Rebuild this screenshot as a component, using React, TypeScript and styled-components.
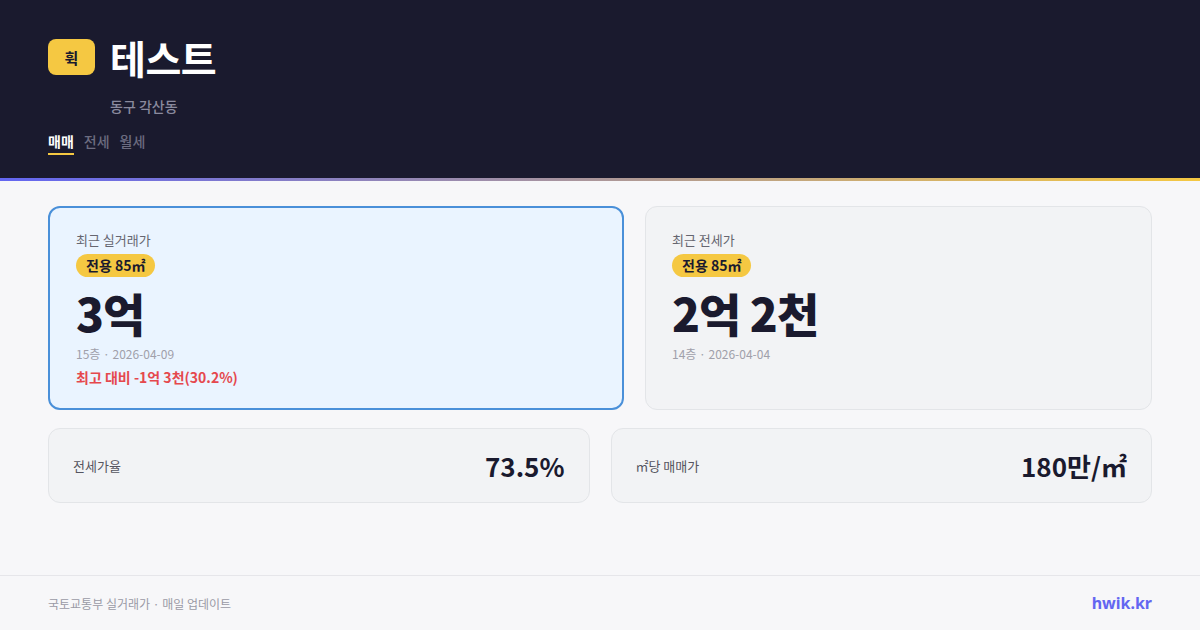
import styled, { createGlobalStyle } from "styled-components";

const GlobalStyle = createGlobalStyle`
  html, body {
    margin: 0;
    padding: 0;
    background: #f7f7f9;
    font-family: "Noto Sans CJK KR", "Noto Sans", sans-serif;
  }
  #root {
    width: 1200px;
    height: 630px;
  }
`;

const Page = styled.div`
  width: 1200px;
  height: 630px;
  display: flex;
  flex-direction: column;
  background: #f7f7f9;
  overflow: hidden;
`;

const Header = styled.header`
  background: #1a1a2e;
  height: 181px;
  box-sizing: border-box;
  padding: 33px 48px 0;
  border-bottom: 3px solid transparent;
  border-image: linear-gradient(90deg, #6366f1, #f5c842) 1;
`;

const TitleRow = styled.div`
  display: flex;
  align-items: center;
  gap: 15px;
`;

const Logo = styled.div`
  width: 47px;
  height: 36px;
  border-radius: 8px;
  background: #f5c842;
  color: #1a1a2e;
  font-size: 15px;
  font-weight: 700;
  display: flex;
  align-items: center;
  justify-content: center;
`;

const Title = styled.h1`
  margin: 0;
  color: #ffffff;
  font-size: 39px;
  font-weight: 700;
  line-height: 48px;
  letter-spacing: -0.5px;
`;

const Sub = styled.div`
  margin: 15px 0 0 62px;
  color: #8a8a9e;
  font-size: 14px;
  font-weight: 500;
  line-height: 20px;
`;

const Tabs = styled.nav`
  display: flex;
  gap: 10px;
  margin-top: 15px;
`;

const Tab = styled.span<{ $active?: boolean }>`
  font-size: 14px;
  font-weight: ${(p) => (p.$active ? 700 : 500)};
  color: ${(p) => (p.$active ? "#ffffff" : "#6c6c80")};
  line-height: 20px;
  padding-bottom: 2px;
  border-bottom: 2px solid ${(p) => (p.$active ? "#f5c842" : "transparent")};
`;

const Main = styled.main`
  flex: 1;
  padding: 25px 48px 0;
  display: flex;
  flex-direction: column;
  gap: 18px;
`;

const TopRow = styled.div`
  display: grid;
  grid-template-columns: 576px 1fr;
  gap: 21px;
`;

const BottomRow = styled.div`
  display: grid;
  grid-template-columns: 1fr 1fr;
  gap: 21px;
`;

const PriceCard = styled.div<{ $highlight?: boolean }>`
  height: 204px;
  box-sizing: border-box;
  border-radius: 12px;
  background: ${(p) => (p.$highlight ? "#eaf4ff" : "#f2f3f5")};
  border: ${(p) => (p.$highlight ? "2px solid #4a90d9" : "1px solid #e3e5e8")};
  padding: ${(p) => (p.$highlight ? "23px 26px" : "24px 26px")};
  display: flex;
  flex-direction: column;
`;

const Label = styled.div`
  font-size: 13px;
  color: #666670;
  line-height: 18px;
`;

const AreaBadge = styled.span`
  align-self: flex-start;
  margin-top: 5px;
  background: #f5c842;
  color: #1a1a2e;
  font-size: 14px;
  font-weight: 700;
  line-height: 23px;
  padding: 0 10px;
  border-radius: 12px;
`;

const Price = styled.div`
  margin-top: 2px;
  font-size: 46px;
  font-weight: 800;
  color: #1a1a2e;
  line-height: 66px;
  letter-spacing: -1px;
`;

const Meta = styled.div`
  font-size: 12px;
  color: #a0a0aa;
  line-height: 18px;
`;

const Diff = styled.div`
  margin-top: 4px;
  font-size: 14px;
  font-weight: 700;
  color: #e5484d;
  line-height: 20px;
`;

const StatCard = styled.div`
  height: 75px;
  box-sizing: border-box;
  border-radius: 12px;
  background: #f2f3f5;
  border: 1px solid #e3e5e8;
  padding: 0 24px;
  display: flex;
  align-items: center;
  justify-content: space-between;
`;

const StatLabel = styled.span`
  font-size: 13px;
  color: #555560;
`;

const StatValue = styled.span`
  font-size: 26px;
  font-weight: 700;
  color: #1a1a2e;
`;

const Footer = styled.footer`
  height: 54px;
  border-top: 1px solid #e6e6ea;
  padding: 0 48px;
  display: flex;
  align-items: center;
  justify-content: space-between;
  background: #f7f7f9;
`;

const Source = styled.span`
  font-size: 12px;
  color: #9a9aa6;
`;

const Brand = styled.span`
  font-size: 16px;
  font-weight: 700;
  color: #6366f1;
  font-family: "Noto Sans", "Noto Sans CJK KR", sans-serif;
`;

export default function App() {
  return (
    <Page>
      <GlobalStyle />
      <Header>
        <TitleRow>
          <Logo>휙</Logo>
          <Title>테스트</Title>
        </TitleRow>
        <Sub>동구 각산동</Sub>
        <Tabs>
          <Tab $active>매매</Tab>
          <Tab>전세</Tab>
          <Tab>월세</Tab>
        </Tabs>
      </Header>
      <Main>
        <TopRow>
          <PriceCard $highlight>
            <Label>최근 실거래가</Label>
            <AreaBadge>전용 85㎡</AreaBadge>
            <Price>3억</Price>
            <Meta>15층 · 2026-04-09</Meta>
            <Diff>최고 대비 -1억 3천(30.2%)</Diff>
          </PriceCard>
          <PriceCard>
            <Label>최근 전세가</Label>
            <AreaBadge>전용 85㎡</AreaBadge>
            <Price>2억 2천</Price>
            <Meta>14층 · 2026-04-04</Meta>
          </PriceCard>
        </TopRow>
        <BottomRow>
          <StatCard>
            <StatLabel>전세가율</StatLabel>
            <StatValue>73.5%</StatValue>
          </StatCard>
          <StatCard>
            <StatLabel>㎡당 매매가</StatLabel>
            <StatValue>180만/㎡</StatValue>
          </StatCard>
        </BottomRow>
      </Main>
      <Footer>
        <Source>국토교통부 실거래가 · 매일 업데이트</Source>
        <Brand>hwik.kr</Brand>
      </Footer>
    </Page>
  );
}
